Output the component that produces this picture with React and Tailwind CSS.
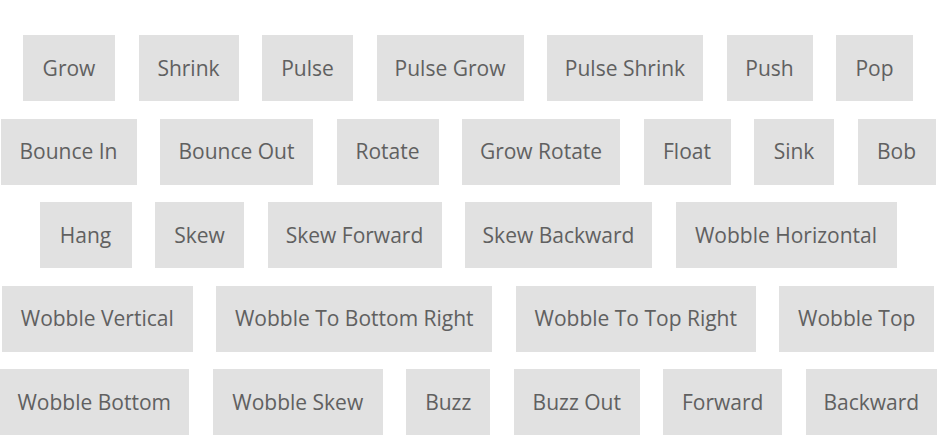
const rows = [
  [
    ["Grow", "w-[92px]"],
    ["Shrink", "w-[100px]"],
    ["Pulse", "w-[91px]"],
    ["Pulse Grow", "w-[147px]"],
    ["Pulse Shrink", "w-[156px]"],
    ["Push", "w-[86px]"],
    ["Pop", "w-[77px]"],
  ],
  [
    ["Bounce In", "w-[136px]"],
    ["Bounce Out", "w-[153px]"],
    ["Rotate", "w-[102px]"],
    ["Grow Rotate", "w-[158px]"],
    ["Float", "w-[87px]"],
    ["Sink", "w-[80px]"],
    ["Bob", "w-[78px]"],
  ],
  [
    ["Hang", "w-[92px]"],
    ["Skew", "w-[89px]"],
    ["Skew Forward", "w-[174px]"],
    ["Skew Backward", "w-[187px]"],
    ["Wobble Horizontal", "w-[221px]"],
  ],
  [
    ["Wobble Vertical", "w-[191px]"],
    ["Wobble To Bottom Right", "w-[276px]"],
    ["Wobble To Top Right", "w-[240px]"],
    ["Wobble Top", "w-[155px]"],
  ],
  [
    ["Wobble Bottom", "w-[190px]"],
    ["Wobble Skew", "w-[170px]"],
    ["Buzz", "w-[84px]"],
    ["Buzz Out", "w-[126px]"],
    ["Forward", "w-[119px]"],
    ["Backward", "w-[131px]"],
  ],
];

export default function App() {
  return (
    <div className="w-[948px] h-[446px] overflow-hidden bg-white font-['Open_Sans',sans-serif]">
      <div className="w-[936px] pt-[35px] flex flex-col gap-[17.5px]">
        {rows.map((row, i) => (
          <div key={i} className="flex justify-center gap-[23.5px]">
            {row.map(([label, w]) => (
              <button
                key={label}
                className={`${w} h-[66px] shrink-0 bg-[#e1e1e1] text-[#606060] text-[21px] pt-[1px] flex items-center justify-center whitespace-nowrap`}
              >
                {label}
              </button>
            ))}
          </div>
        ))}
      </div>
    </div>
  );
}
